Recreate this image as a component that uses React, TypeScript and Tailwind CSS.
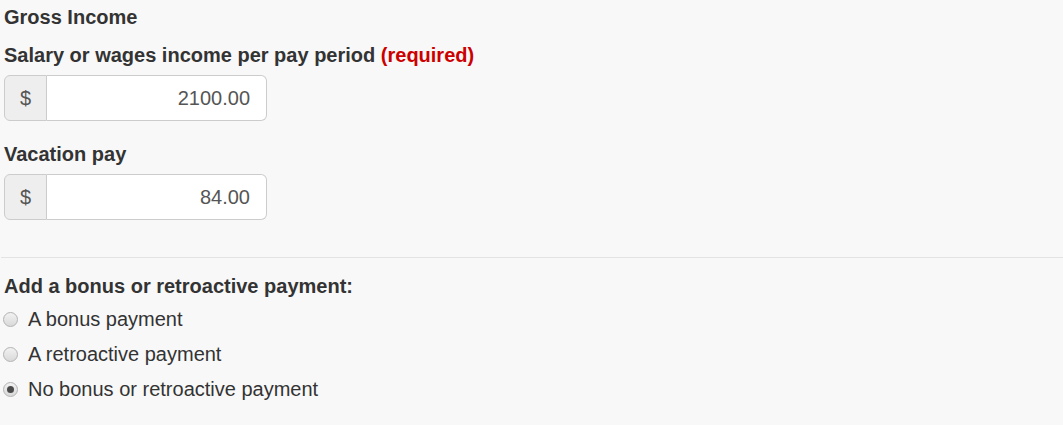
import React from "react";

function Radio({ checked, label }: { checked?: boolean; label: string }) {
  return (
    <div className="h-[35px] flex items-center">
      <span className="ml-[-1px] w-[15px] h-[15px] rounded-full border border-[#b3b3b3] bg-gradient-to-b from-[#f2f2f2] to-[#d9d9d9] flex items-center justify-center shrink-0">
        {checked && <span className="w-[7px] h-[7px] rounded-full bg-[#4a4a4a]" />}
      </span>
      <span className="ml-[10px] text-[20px] leading-[25px] text-[#333]">{label}</span>
    </div>
  );
}

function MoneyInput({ value }: { value: string }) {
  return (
    <div className="flex w-[263px] h-[46px]">
      <div className="w-[43px] shrink-0 flex items-center justify-center bg-[#eeeeee] border border-[#cccccc] rounded-l-[6px] text-[20px] text-[#555]">
        $
      </div>
      <div className="flex-1 flex items-center justify-end bg-white border border-l-0 border-[#cccccc] rounded-r-[6px] pr-[16px] text-[20px] text-[#555]">
        {value}
      </div>
    </div>
  );
}

export default function App() {
  return (
    <div
      className="w-[1063px] h-[425px] bg-[#f8f8f8] text-[#333] overflow-hidden"
      style={{ fontFamily: '"Liberation Sans", Arial, sans-serif' }}
    >
      <div className="pl-[4px]">
        <div className="pt-[5px] text-[20px] leading-[25px] font-bold">Gross Income</div>
        <div className="mt-[13px] text-[20px] leading-[25px] font-bold">
          Salary or wages income per pay period <span className="text-[#cc0000]">(required)</span>
        </div>
        <div className="mt-[7px]">
          <MoneyInput value="2100.00" />
        </div>
        <div className="mt-[21px] text-[20px] leading-[25px] font-bold">Vacation pay</div>
        <div className="mt-[7px]">
          <MoneyInput value="84.00" />
        </div>
      </div>
      <div className="mt-[37px] ml-[1px] border-t border-[#e3e3e3]" />
      <div className="pl-[4px]">
        <div className="mt-[16px] text-[20px] leading-[25px] font-bold">
          Add a bonus or retroactive payment:
        </div>
        <div className="mt-[3px]">
          <Radio label="A bonus payment" />
          <Radio label="A retroactive payment" />
          <Radio checked label="No bonus or retroactive payment" />
        </div>
      </div>
    </div>
  );
}
